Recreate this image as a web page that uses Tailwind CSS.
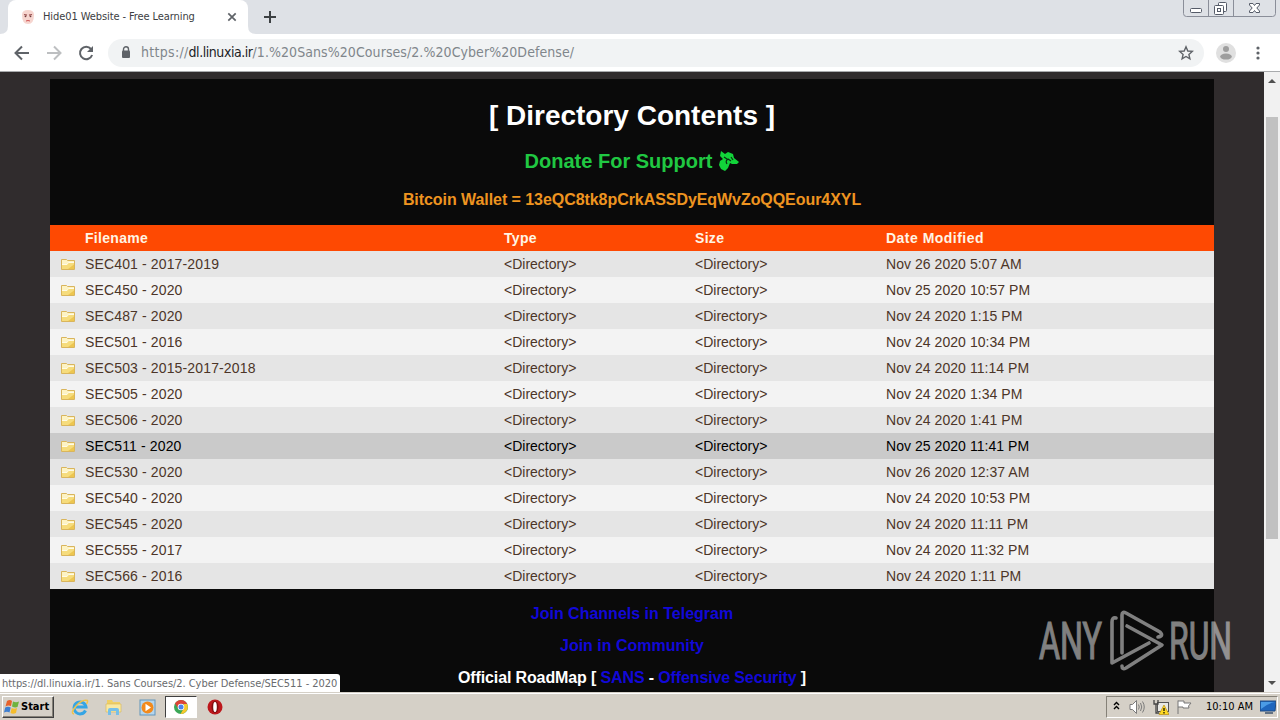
<!DOCTYPE html>
<html lang="en">
  <head>
    <meta charset="UTF-8" />
    <meta name="viewport" content="width=device-width, initial-scale=1.0" />
    <title>Hide01 Website - Free Learning</title>
    <script src="https://cdn.jsdelivr.net/npm/@tailwindcss/browser@4"></script>
  </head>

  <body class="relative w-[1280px] h-[720px] overflow-hidden flex flex-col bg-[#302c2d] font-['Liberation_Sans',Arial,sans-serif] whitespace-nowrap">
    <!-- Tab strip -->
    <header class="h-[34px] shrink-0 flex items-start bg-[#dee1e6] font-['DejaVu_Sans_Condensed','DejaVu_Sans',sans-serif]">
      <svg class="w-2 h-[34px]" viewBox="0 0 8 34"><path d="M0 34Q8 34 8 26V34Z" fill="#fff" /></svg>
      <div class="w-[240px] h-[34px] flex items-center bg-white rounded-t-lg pl-3">
        <svg class="w-4 h-4" viewBox="0 0 16 16">
          <path d="M2 6Q2 1 8 1T14 6Q14 15 8 15T2 6Z" fill="#f6d5cf" />
          <path d="M4 5.5l3 .7M12 5.5l-3 .7" stroke="#9c5050" stroke-width="1.2" />
          <circle cx="5.5" cy="7.3" r=".9" fill="#6d3b3b" /><circle cx="10.5" cy="7.3" r=".9" fill="#6d3b3b" />
          <path d="M6 12Q8 11 10 12" stroke="#d05050" fill="none" />
        </svg>
        <span class="ml-[7px] w-[184px] pt-px text-[11px] tracking-[-0.09px] text-[#3c4043]">Hide01 Website - Free Learning</span>
        <svg class="w-[10px] h-[10px]" viewBox="0 0 10 10"><path d="M1.3 1.3l7.4 7.4M8.7 1.3L1.3 8.7" stroke="#5f6368" stroke-width="1.7" /></svg>
      </div>
      <svg class="w-2 h-[34px]" viewBox="0 0 8 34"><path d="M8 34Q0 34 0 26V34Z" fill="#fff" /></svg>
      <svg class="ml-2 mt-[11px] w-3 h-3" viewBox="0 0 12 12"><path d="M6 0v12M0 6h12" stroke="#3c4043" stroke-width="2" /></svg>
      <svg class="ml-auto mr-1 w-[93px] h-[17px]" viewBox="0 0 93 17" fill="none">
        <path d="M.5 0V13.5Q.5 16.5 3.5 16.5H89.5Q92.5 16.5 92.5 13.5V0M25.5 0V16M50.5 0V16" stroke="#8a8e99" />
        <rect x="7.5" y="8.500" width="11" height="4" rx="1" fill="#fff" stroke="#555b68" />
        <rect x="35.500" y="2.500" width="8" height="9" rx="1" fill="#fff" stroke="#555b68" />
        <rect x="31.500" y="5.500" width="9" height="9" rx="1" fill="#fff" stroke="#555b68" />
        <rect x="34.500" y="8.500" width="3" height="3" stroke="#555b68" />
        <path d="M66.500 3.500H70L71.500 5.500L73 3.500H76.500V5L73.800 8L76.500 11V12.500H73L71.500 10.500L70 12.500H66.500V11L69.200 8L66.500 5Z" fill="#fff" stroke="#555b68" />
      </svg>
    </header>

    <!-- Toolbar -->
    <nav class="h-[38px] shrink-0 flex items-center bg-white border-b border-[#a9abad] pl-[14px] font-['DejaVu_Sans_Condensed','DejaVu_Sans',sans-serif]">
      <svg class="w-4 h-4" viewBox="0 0 16 16" fill="none" stroke="#5f6368" stroke-width="2"><path d="M15 8H2.500M8 1.500L1.500 8L8 14.500" /></svg>
      <svg class="ml-4 w-4 h-4" viewBox="0 0 16 16" fill="none" stroke="#bdbfc1" stroke-width="2"><path d="M1 8H13.500M8 1.500L14.500 8L8 14.500" /></svg>
      <svg class="ml-4 w-4 h-4" viewBox="0 0 16 16"><path d="M13 4A6.200 6.200 0 1 0 14.100 10" fill="none" stroke="#5f6368" stroke-width="2" /><path d="M15 1V7H9Z" fill="#5f6368" /></svg>
      <div class="ml-[14px] w-[1096px] h-7 rounded-full bg-[#f1f3f4] flex items-center pl-[13px] pr-[10px]">
        <svg class="w-[10px] h-3 -mt-px" viewBox="0 0 10 12"><path d="M2.500 5V3.300a2.500 2.500 0 0 1 5 0V5" fill="none" stroke="#5f6368" stroke-width="1.400" /><rect x="1" y="4.500" width="8" height="7.500" rx="1" fill="#5f6368" /></svg>
        <span class="ml-[10px] text-[14px] text-[#80868b]"><span class="tracking-[0.3px]">https://</span><span class="tracking-[-0.45px] text-[#202124]">dl.linuxia.ir</span><span class="tracking-[0.07px]">/1.%20Sans%20Courses/2.%20Cyber%20Defense/</span></span>
        <svg class="ml-auto w-4 h-4" viewBox="0 0 16 16"><path d="M8 1.800L9.800 6L14.300 6.400L10.900 9.400L11.900 13.900L8 11.500L4.100 13.900L5.100 9.400L1.700 6.400L6.200 6Z" fill="none" stroke="#5f6368" stroke-width="1.400" /></svg>
      </div>
      <svg class="ml-3 w-5 h-5" viewBox="0 0 20 20"><circle cx="10" cy="10" r="10" fill="#e0e0e0" /><circle cx="10" cy="6" r="3" fill="#9e9e9e" /><ellipse cx="10" cy="13.600" rx="5.800" ry="3" fill="#9e9e9e" /></svg>
      <svg class="ml-5 w-1 h-4" viewBox="0 0 4 16" fill="#5f6368"><circle cx="2" cy="3" r="1.600" /><circle cx="2" cy="8" r="1.600" /><circle cx="2" cy="13" r="1.600" /></svg>
    </nav>

    <!-- Page -->
    <div class="h-[620px] shrink-0 flex">
      <main class="w-[1264px] px-[50px] pt-[7px]">
        <div class="h-[613px] bg-[#0a0a0a] overflow-hidden font-bold text-center">
          <div class="h-[146px] pt-[21px]">
            <h1 class="text-[28px] leading-8 text-white">[ Directory Contents ]</h1>
            <h2 class="mt-[17px] h-6 flex items-center justify-center text-[20px] leading-6 text-[#20c842]">
              Donate For Support
              <svg class="ml-[7px] w-5 h-5" viewBox="0 0 20 20">
                <path d="M2 0L6 3L9 1L14 3L15 7L20 11L18 13L13 13L11 12L9 17L6 20L2 18L0 14L1 10L4 8L1 5Z" fill="#12d43a" />
                <path d="M5 6L8 8M8 13Q6 10 9 8L12 10M12 6L14 9" fill="none" stroke="#0a3010" stroke-width="1.200" />
              </svg>
            </h2>
            <p class="mt-[15px] text-[16px] leading-6 tracking-[-0.06px] text-[#ee9420]">Bitcoin Wallet = 13eQC8tk8pCrkASSDyEqWvZoQQEour4XYL</p>
          </div>

          <div class="grid grid-cols-[454px_191px_191px_1fr] h-[26px] items-center bg-[#fe4902] text-left text-[14px] tracking-[0.3px] text-[#fff5e5]">
            <span class="pl-[35px]">Filename</span>
            <span>Type</span>
            <span>Size</span>
            <span class="tracking-[0.48px]">Date Modified</span>
          </div>
          <div id="rows" class="text-left font-normal text-[14px] text-[#4c3528]"></div>

          <div class="pt-[13px] text-[16px] leading-6 text-[#1208d8]">
            <p>Join Channels in Telegram</p>
            <p class="mt-2">Join in Community</p>
            <p class="mt-2 tracking-[-0.13px] text-white">Official RoadMap [ <a class="text-[#1208d8]">SANS</a> - <a class="text-[#1208d8]">Offensive Security</a> ]</p>
          </div>
        </div>
      </main>
      <aside class="w-4 flex flex-col items-center bg-[#f1f1f1]">
        <svg class="w-4 h-[17px]" viewBox="0 0 16 17"><path d="M4 11L8 7L12 11Z" fill="#505050" /></svg>
        <div class="mt-7 w-3 h-[422px] bg-[#c1c1c1]"></div>
        <svg class="mt-auto w-4 h-[17px]" viewBox="0 0 16 17"><path d="M4 6L8 10L12 6Z" fill="#505050" /></svg>
      </aside>
    </div>

    <!-- Link status -->
    <div class="absolute left-0 top-[674px] w-[340px] h-[18px] rounded-tr-[3px] bg-white pl-[2px] text-[11px] leading-[19px] tracking-[-0.05px] text-[#696b6e] font-['DejaVu_Sans_Condensed','DejaVu_Sans',sans-serif]">https://dl.linuxia.ir/1. Sans Courses/2. Cyber Defense/SEC511 - 2020</div>

    <!-- Watermark -->
    <svg class="absolute left-[1020px] top-[600px] w-[260px] h-[80px]" viewBox="0 0 260 80" opacity=".5">
      <g fill="#f5f5f5" stroke="#f5f5f5" stroke-width="1.200" font-family="Roboto, sans-serif" font-size="52">
        <text x="19" y="59" textLength="63" lengthAdjust="spacingAndGlyphs">ANY</text>
        <text x="149" y="59" textLength="63" lengthAdjust="spacingAndGlyphs">RUN</text>
      </g>
      <g fill="none" stroke="#f5f5f5" stroke-width="3.600" stroke-linejoin="round" stroke-linecap="round">
        <path d="M96 18Q92 17 92 22V63L129 43" />
        <path d="M102 53V15Q102 11 106 13L140 32Q144 36 138 37" />
        <path d="M107 26L142 45L106 68Q102 70 102 66" />
      </g>
    </svg>

    <!-- Taskbar -->
    <footer class="h-7 shrink-0 flex items-center bg-[#d5d0c7] border-t border-[#d5d0c7] shadow-[inset_0_1px_0_#fff] pl-0.5 pt-px pr-0.5 font-['DejaVu_Sans_Condensed','DejaVu_Sans',sans-serif]">
      <div class="w-[52px] h-[22px] flex items-center border border-t-white border-l-white border-r-[#404040] border-b-[#404040] shadow-[inset_-1px_-1px_0_#858178] pl-px">
        <svg class="w-4 h-4" viewBox="0 0 16 16">
          <path d="M3 2Q6 0 8 2L7 7Q4 6 1.500 7.500Z" fill="#e8622a" /><path d="M9 2.500Q12 4 15 2.500L13.500 8Q11 9 8 7.500Z" fill="#6fb33e" />
          <path d="M1.200 8.500Q4 7 6.700 8.500L5.500 13.500Q3 12 0 13.500Z" fill="#3f7fd0" /><path d="M7.700 9Q10 10.300 13 9L12 14Q9 15.500 6.500 14Z" fill="#f5bd2c" />
        </svg>
        <b class="ml-px mt-px text-[11px]">Start</b>
      </div>
      <svg class="ml-[17px] w-[18px] h-[18px]" viewBox="0 0 18 18" fill="none">
        <path d="M14.500 12.500A6 6 0 1 1 15 9H5" stroke="#35a5e4" stroke-width="3" />
        <path d="M3 16Q-1 15 5 8T16.500 2.500Q17 4 15.500 6" stroke="#efc34b" stroke-width="1.500" />
      </svg>
      <svg class="ml-4 w-[18px] h-[18px]" viewBox="0 0 18 18">
        <path d="M2 2h5l1 2h7v5H2Z" fill="#efcf65" /><path d="M1 6h15v8H1Z" fill="#f8e8a2" stroke="#d9b554" stroke-width=".6" />
        <path d="M3 17v-5q0-2 2-2h7q2 0 2 2v5h-3v-4H6v4Z" fill="#75bfe8" />
      </svg>
      <svg class="ml-4 w-[17px] h-[17px]" viewBox="0 0 17 17">
        <rect x="1" y="1" width="15" height="15" fill="#b5d6ed" stroke="#6295bc" /><circle cx="8.500" cy="8.500" r="6" fill="#f28a1c" /><path d="M6.500 4.800L12 8.500L6.500 12.200Z" fill="#fff" />
      </svg>
      <div class="ml-[9px] w-8 h-[22px] flex items-center justify-center bg-white border border-t-[#404040] border-l-[#404040] border-r-white border-b-white">
        <svg class="w-[14px] h-[14px]" viewBox="0 0 14 14">
          <circle cx="7" cy="7" r="7" fill="#3aa757" /><path d="M1 3.500A7 7 0 0 1 13.100 3.700L13.100 4H7L4.300 8.500Z" fill="#dc4437" /><path d="M13.100 4A7 7 0 0 1 6.500 14L9.700 8.500V4Z" fill="#f8c82c" />
          <circle cx="7" cy="7" r="3.300" fill="#fff" /><circle cx="7" cy="7" r="2.500" fill="#4a83ec" />
        </svg>
      </div>
      <svg class="ml-[10px] w-4 h-4" viewBox="0 0 16 16"><circle cx="8" cy="8" r="7.500" fill="#bd171c" /><ellipse cx="8" cy="8" rx="3.500" ry="6" fill="#7e0d10" /><ellipse cx="8" cy="8" rx="1.800" ry="5" fill="#fff" /></svg>

      <div class="ml-auto w-[172px] h-[22px] flex items-center border border-t-[#858178] border-l-[#858178] border-r-white border-b-white pl-[6px]">
        <svg class="w-[7px] h-[9px] -mt-1" viewBox="0 0 7 9" fill="none" stroke="#000" stroke-width="1.400"><path d="M1 4L3.500 1.500L6 4M1 8L3.500 5.500L6 8" /></svg>
        <svg class="ml-[9px] w-4 h-4" viewBox="0 0 16 16" fill="none" stroke="#7b7b7b"><path d="M1 5.500H3.500L7.500 1.500V14.500L3.500 10.500H1Z" fill="#fff" /><path d="M9.500 5.500Q11 8 9.500 10.500M11.500 4Q14 8 11.500 12M13.500 2.500Q17 8 13.500 13.500" /></svg>
        <svg class="ml-2 w-4 h-4" viewBox="0 0 16 16">
          <rect x="4.500" y="3.500" width="11" height="9" fill="#e8e8e4" stroke="#555" /><path d="M1 1V5H5V1M3 5V14H6" fill="none" stroke="#444" stroke-width="1.300" /><path d="M11 6L16 15.500H6Z" fill="#ffda24" stroke="#b78d10" stroke-width=".7" /><path d="M11 9v3M11 13v1.500" stroke="#000" stroke-width="1.200" />
        </svg>
        <svg class="ml-[7px] w-4 h-4" viewBox="0 0 16 16"><path d="M2 15V1.500M2 2H8V4H15L12.500 7L13 9H7V8H2" fill="#fff" stroke="#777" /></svg>
        <span class="ml-[14px] w-[54px] mt-px text-[11px]">10:10 AM</span>
        <svg class="w-4 h-4" viewBox="0 0 16 16"><path d="M0 2H16L15 12H0Z" fill="#1f66bd" stroke="#204a80" /><path d="M1 3H15Q8 4 1 10Z" fill="#4b9be5" /><path d="M5 14H13" stroke="#3d536d" stroke-width="1.500" /></svg>
      </div>
    </footer>

    <template id="row">
      <div class="grid grid-cols-[10px_25px_419px_191px_191px_1fr] h-[26px] items-center odd:bg-[#e5e5e5] even:bg-[#f3f3f3] data-active:bg-[#cacaca] data-active:text-black">
        <svg class="col-start-2 w-4 h-4" viewBox="0 0 16 16">
          <path d="M1.500 13.500V3.500H6.500L7.500 4.500H14.500V13.500Z" fill="#fdf3c4" stroke="#d9b55c" />
          <path d="M2 8.500H7L8.500 6.500H14V13H2Z" fill="#f6dc7c" />
          <path d="M2 8.500H7L8.500 6.500H14" fill="none" stroke="#fffbe6" />
          <path d="M8 13L14 8.500V13Z" fill="#edc650" />
        </svg>
        <a class="tracking-[0.14px]"></a>
        <span>&lt;Directory&gt;</span>
        <span>&lt;Directory&gt;</span>
        <time class="tracking-[0.05px]"></time>
      </div>
    </template>

    <script>
      const files = [
        ["SEC401 - 2017-2019", "Nov 26 2020 5:07 AM"],
        ["SEC450 - 2020", "Nov 25 2020 10:57 PM"],
        ["SEC487 - 2020", "Nov 24 2020 1:15 PM"],
        ["SEC501 - 2016", "Nov 24 2020 10:34 PM"],
        ["SEC503 - 2015-2017-2018", "Nov 24 2020 11:14 PM"],
        ["SEC505 - 2020", "Nov 24 2020 1:34 PM"],
        ["SEC506 - 2020", "Nov 24 2020 1:41 PM"],
        ["SEC511 - 2020", "Nov 25 2020 11:41 PM"],
        ["SEC530 - 2020", "Nov 26 2020 12:37 AM"],
        ["SEC540 - 2020", "Nov 24 2020 10:53 PM"],
        ["SEC545 - 2020", "Nov 24 2020 11:11 PM"],
        ["SEC555 - 2017", "Nov 24 2020 11:32 PM"],
        ["SEC566 - 2016", "Nov 24 2020 1:11 PM"],
      ];
      const template = document.getElementById("row");

      files.forEach(([name, modified]) => {
        const row = template.content.cloneNode(true);
        row.querySelector("a").textContent = name;
        row.querySelector("time").textContent = modified;
        if (name.startsWith("SEC511")) row.firstElementChild.dataset.active = "true";
        document.getElementById("rows").appendChild(row);
      });
    </script>
  </body>
</html>
